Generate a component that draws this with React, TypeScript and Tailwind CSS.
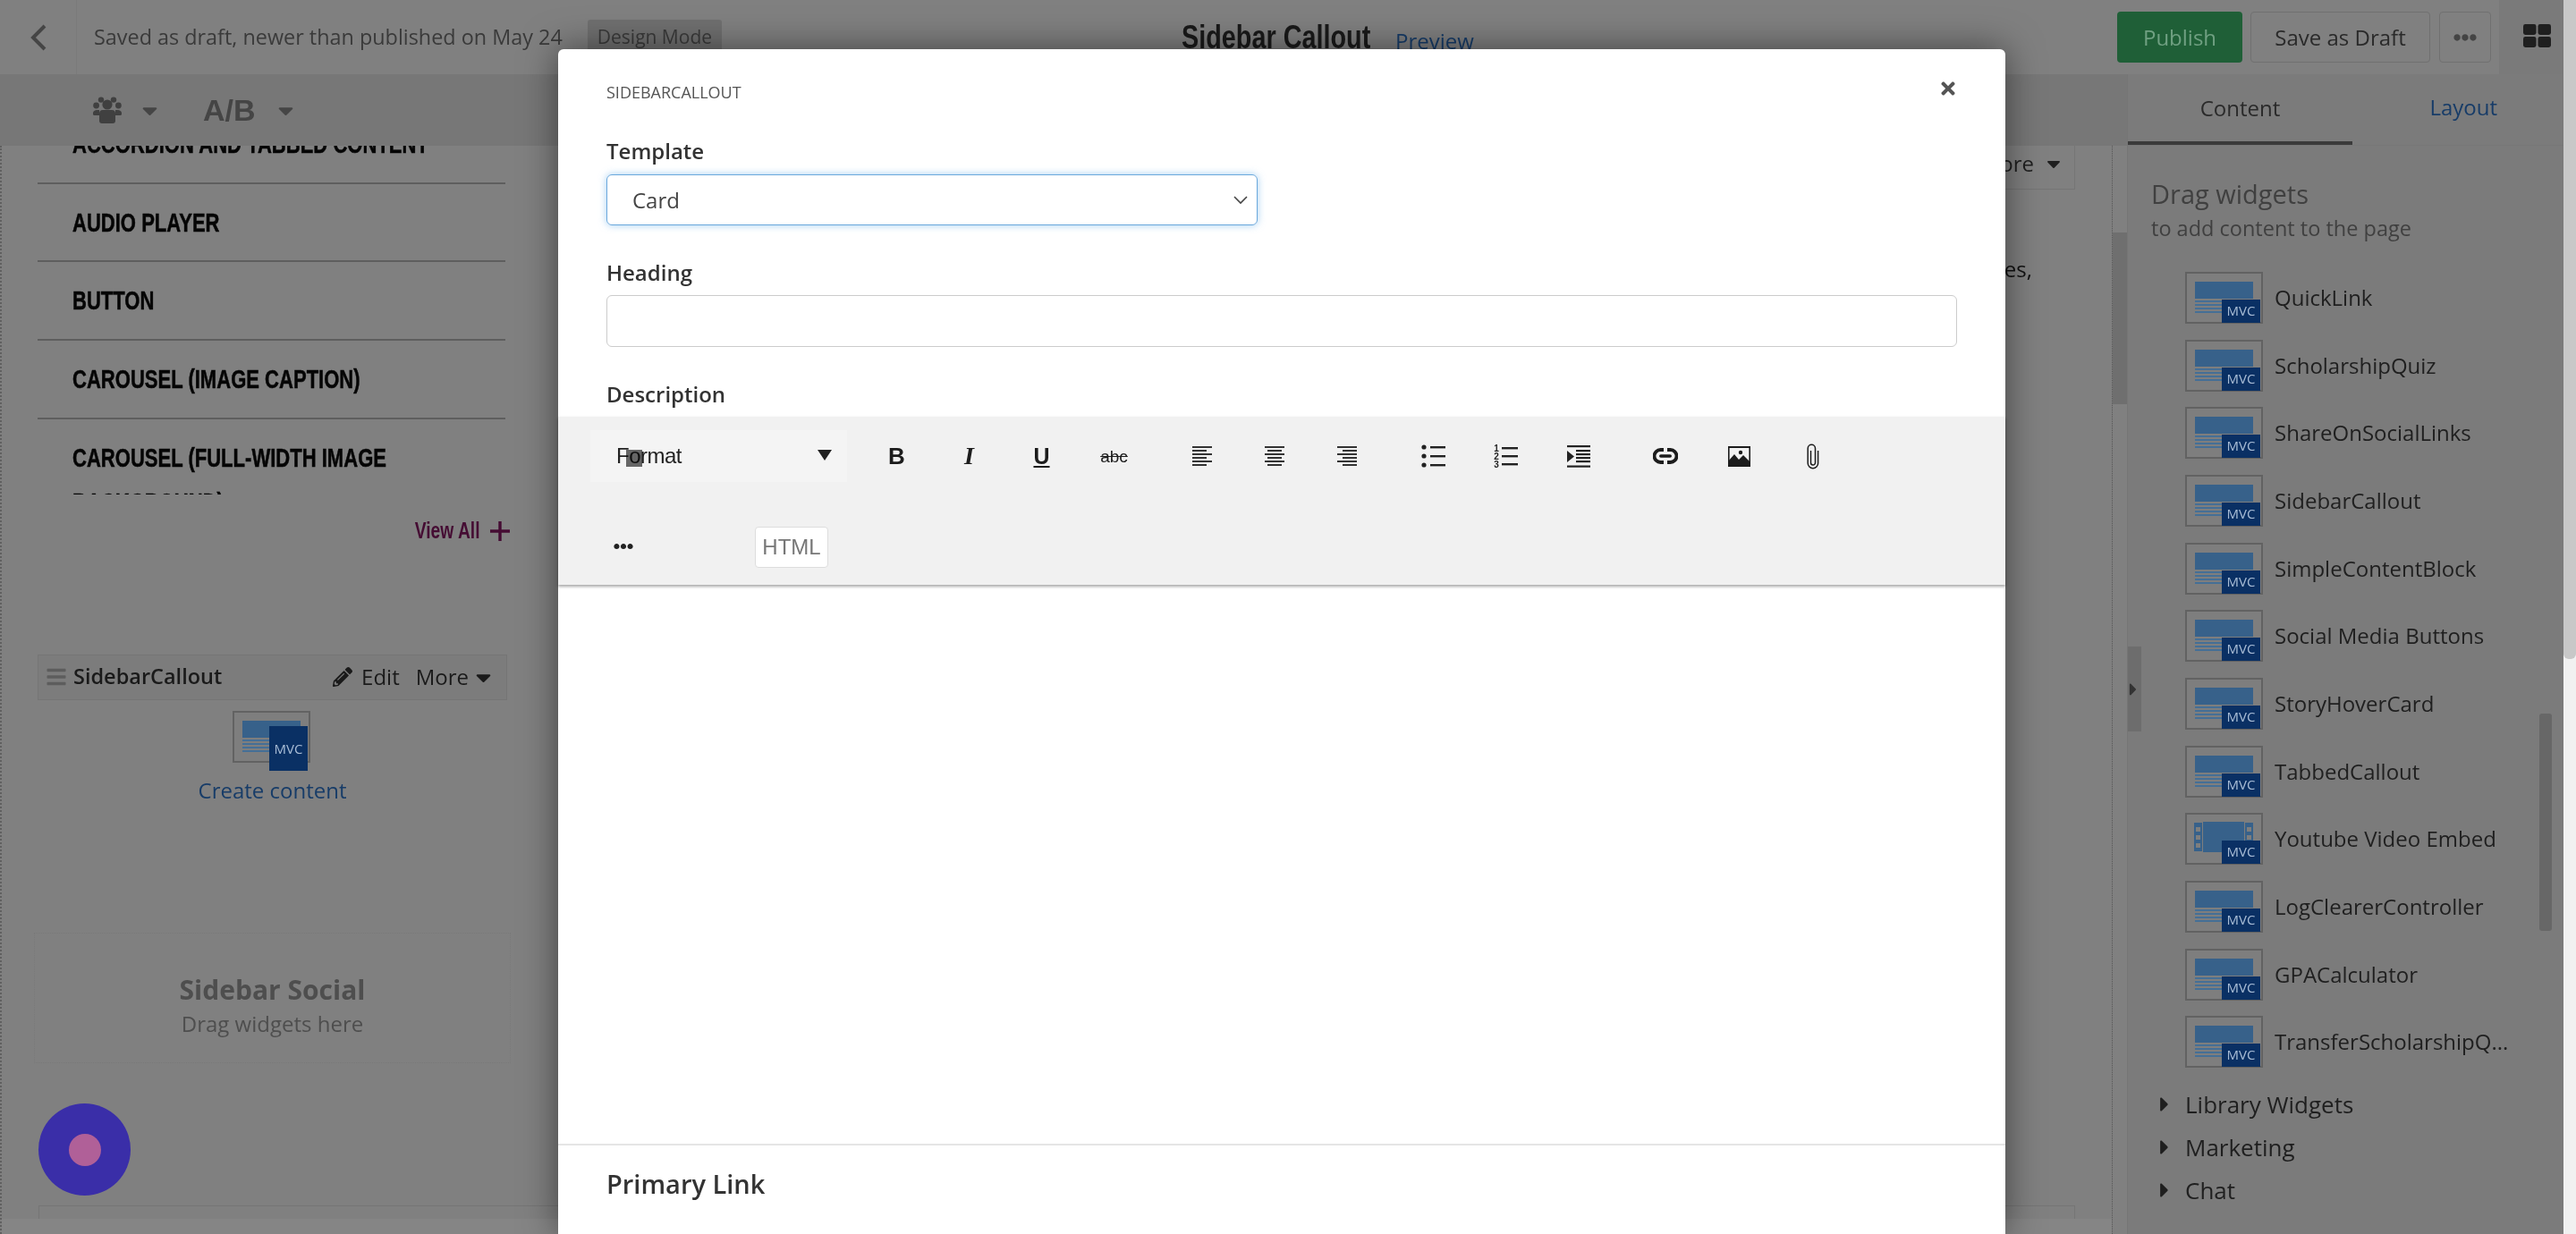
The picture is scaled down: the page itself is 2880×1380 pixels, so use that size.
import React from "react";
import { FaPencilAlt, FaBars, FaTimes, FaEllipsisH, FaCaretDown, FaCaretRight } from "react-icons/fa";

const COND = "font-['Liberation_Sans',sans-serif]";

function Squeezed({ children }: { children: React.ReactNode }) {
  return <span className="inline-block origin-left scale-x-[0.76] whitespace-nowrap">{children}</span>;
}

function MvcIcon({ video = false, tall = false }: { video?: boolean; tall?: boolean }) {
  return (
    <svg width="88" height={tall ? 68 : 58} viewBox={tall ? "0 0 88 68" : "0 0 88 58"} className="shrink-0">
      <rect x="1" y="1" width="85" height="56" fill="#7e7e7e" stroke="#626262" strokeWidth="2" />
      {video ? (
        <>
          <rect x="20" y="10" width="46" height="34" fill="#37618a" />
          <rect x="10" y="11" width="9" height="32" fill="#37618a" />
          <rect x="67" y="11" width="9" height="28" fill="#37618a" />
          <rect x="12" y="16" width="5" height="5" fill="#7e7e7e" />
          <rect x="12" y="25" width="5" height="5" fill="#7e7e7e" />
          <rect x="12" y="34" width="5" height="5" fill="#7e7e7e" />
          <rect x="69" y="16" width="5" height="5" fill="#7e7e7e" />
          <rect x="69" y="25" width="5" height="5" fill="#7e7e7e" />
        </>
      ) : (
        <>
          <rect x="11" y="11" width="65" height="19" fill="#37618a" />
          <rect x="11" y="32" width="32" height="2" fill="#456f96" />
          <rect x="11" y="36" width="32" height="2" fill="#456f96" />
          <rect x="11" y="40" width="32" height="2" fill="#456f96" />
          <rect x="11" y="44" width="32" height="2" fill="#456f96" />
        </>
      )}
      <rect x="41" y={tall ? 17 : 31} width="43" height={tall ? 50 : 26} fill="#0a3064" />
      <text x="62.5" y={tall ? 48 : 49} textAnchor="middle" fontSize="15" fill="#a9bdd6" fontFamily="Open Sans, sans-serif">MVC</text>
    </svg>
  );
}

function AlignIcon({ mode }: { mode: "l" | "c" | "r" }) {
  const ys = [1, 5, 9, 13, 17, 21];
  const wide = [22, 16, 22, 16, 22, 16];
  return (
    <svg width="24" height="24" viewBox="0 0 24 24">
      {ys.map((y, i) => {
        const w = wide[i];
        const x = mode === "l" ? 1 : mode === "r" ? 23 - w : 12 - w / 2;
        return <rect key={y} x={x} y={y} width={w} height="2" fill="#333" />;
      })}
    </svg>
  );
}

function ListIcon() {
  return (
    <svg width="28" height="26" viewBox="0 0 28 26">
      {[3, 13, 23].map((y) => (
        <g key={y}>
          <circle cx="3" cy={y} r="2.6" fill="#222" />
          <rect x="10" y={y - 1} width="17" height="2.4" fill="#222" />
        </g>
      ))}
    </svg>
  );
}

function OlIcon() {
  return (
    <svg width="28" height="28" viewBox="0 0 28 28">
      {[1, 2, 3].map((n) => (
        <g key={n}>
          <text x="3" y={n * 9} textAnchor="middle" fontSize="10" fontWeight="700" fill="#222" fontFamily="Liberation Sans, sans-serif">{n}</text>
          <rect x="9" y={n * 9 - 5} width="18" height="2.4" fill="#222" />
        </g>
      ))}
    </svg>
  );
}

function IndentIcon() {
  return (
    <svg width="27" height="25" viewBox="0 0 27 25">
      <rect x="1" y="0" width="26" height="2.2" fill="#222" />
      <rect x="1" y="22.5" width="26" height="2.2" fill="#222" />
      {[5, 9, 13, 17].map((y) => (
        <rect key={y} x="11" y={y} width="16" height="2.2" fill="#222" />
      ))}
      <path d="M1 6 L9 12.5 L1 19 Z" fill="#222" />
    </svg>
  );
}

function LinkIcon() {
  return (
    <svg width="28" height="18" viewBox="0 0 28 18">
      <path d="M12 2H8.5a7 7 0 0 0 0 14H12" fill="none" stroke="#1c1c1c" strokeWidth="3.8" />
      <path d="M16 2h3.5a7 7 0 0 1 0 14H16" fill="none" stroke="#1c1c1c" strokeWidth="3.8" />
      <rect x="7" y="7.2" width="14" height="3.6" rx="1.8" fill="#1c1c1c" />
    </svg>
  );
}

function ImageIcon() {
  return (
    <svg width="25" height="23" viewBox="0 0 25 23">
      <rect x="0.8" y="0.8" width="23.4" height="21.4" fill="#f1f1f1" stroke="#1c1c1c" strokeWidth="1.6" />
      <rect x="0" y="0" width="25" height="2" fill="#1c1c1c" />
      <path d="M0 23V17L7 9L12 15L17 10L25 18V23Z" fill="#1c1c1c" />
      <circle cx="14" cy="7" r="2.2" fill="#1c1c1c" />
    </svg>
  );
}

function ClipIcon() {
  return (
    <svg width="16" height="29" viewBox="0 0 16 29">
      <path d="M5.5 8V21.5A2.5 2.5 0 0 0 10.5 21.5V5.5A4 4 0 0 0 2.2 5.5V22A5.6 5.6 0 0 0 13.6 22V8" fill="none" stroke="#1c1c1c" strokeWidth="1.5" />
    </svg>
  );
}

function UsersIcon() {
  return (
    <svg width="32" height="30" viewBox="0 0 32 30" fill="#404040">
      <circle cx="9" cy="3.6" r="3.2" />
      <circle cx="23" cy="3.6" r="3.2" />
      <circle cx="3.6" cy="10" r="3.4" />
      <circle cx="28.4" cy="10" r="3.4" />
      <circle cx="16" cy="9" r="5.6" />
      <path d="M0 20a4 4 0 0 1 4-5h3v6H1.5A1.5 1.5 0 0 1 0 20Z" />
      <path d="M32 20a4 4 0 0 0-4-5h-3v6h5.5A1.5 1.5 0 0 0 32 20Z" />
      <path d="M7 19a4 4 0 0 1 4-4h10a4 4 0 0 1 4 4v8a3 3 0 0 1-3 3H10a3 3 0 0 1-3-3Z" />
    </svg>
  );
}

function GridIcon() {
  return (
    <svg width="31" height="26" viewBox="0 0 31 26" fill="#1f1f1f">
      <rect x="0" y="0" width="14.5" height="12" rx="2.4" />
      <rect x="16.5" y="0" width="14.5" height="12" rx="2.4" />
      <rect x="0" y="14" width="14.5" height="12" rx="2.4" />
      <rect x="16.5" y="14" width="14.5" height="12" rx="2.4" />
    </svg>
  );
}

function Slot({ children }: { children: React.ReactNode }) {
  return <div className="flex h-[58px] w-[81px] items-center justify-center">{children}</div>;
}

const widgets = [
  "QuickLink", "ScholarshipQuiz", "ShareOnSocialLinks", "SidebarCallout", "SimpleContentBlock", "Social Media Buttons",
  "StoryHoverCard", "TabbedCallout", "Youtube Video Embed", "LogClearerController", "GPACalculator", "TransferScholarshipQ...",
];

const accordion = ["ACCORDION AND TABBED CONTENT", "AUDIO PLAYER", "BUTTON", "CAROUSEL (IMAGE CAPTION)"];

export default function App() {
  return (
    <div className="relative flex h-[1380px] w-[2880px] overflow-hidden bg-[#f1f1f1] font-['Open_Sans',sans-serif]">
      <div className="relative flex h-full w-[2866px] flex-col bg-[#808080]">
        {/* Top bar */}
        <div className="flex h-[83px] shrink-0 items-center">
          <div className="flex h-full w-[86px] items-center justify-center border-r border-[#7a7a7a] text-[#444]">
            <svg width="20" height="30" viewBox="0 0 20 30"><path d="M17 2 L4 15 L17 28" fill="none" stroke="#454545" strokeWidth="4" /></svg>
          </div>
          <span className="ml-[19px] text-[23.4px] text-[#3a3a3a]">Saved as draft, newer than published on May 24</span>
          <span className="ml-[28px] rounded-[3px] bg-[#707070] px-[11px] py-[4px] text-[21px] text-[#3a3a3a]">Design Mode</span>
          <span className={`ml-[514px] w-[211px] text-[36px] font-bold text-[#1a1a1a] ${COND}`}>
            <span className="inline-block origin-left scale-x-[0.8] whitespace-nowrap">Sidebar Callout</span>
          </span>
          <span className="ml-[28px] mt-[8px] text-[24px] text-[#173c68]">Preview</span>
          <div className="ml-auto flex h-full items-center">
            <button className="h-[57px] w-[140px] rounded-[4px] bg-[#1f5f37] text-[24px] text-[#70a082]">Publish</button>
            <button className="ml-[9px] h-[57px] w-[201px] rounded-[4px] border border-[#707070] text-[24px] text-[#2a2a2a]">Save as Draft</button>
            <button className="ml-[10px] flex h-[57px] w-[58px] items-center justify-center rounded-[4px] border border-[#707070] text-[26px] text-[#444]"><FaEllipsisH /></button>
            <div className="ml-[9px] flex h-full w-[72px] items-center justify-end bg-[#7a7a7a] pr-[14px]">
              <div className="mb-[4px]"><GridIcon /></div>
            </div>
          </div>
        </div>

        <div className="flex min-h-0 flex-1">
          {/* Left part */}
          <div className="flex w-[2378px] flex-col">
            <div className="flex h-[80px] shrink-0 items-center bg-[#777777] pl-[104px] text-[#454545]">
              <UsersIcon />
              <FaCaretDown className="ml-[18px] text-[27px]" />
              <span className="ml-[46px] font-['Liberation_Sans',sans-serif] text-[34px] font-bold">A/B</span>
              <FaCaretDown className="ml-[20px] text-[27px]" />
            </div>
            <div className="flex min-h-0 flex-1">
              <div className="flex w-[2361px] flex-col border-l-2 border-dotted border-[#606060]">
                <div className="flex h-[1185px] shrink-0">
                  {/* Widget column */}
                  <div className="flex w-[608px] shrink-0 flex-col">
                    <div className="ml-[40px] mr-[45px] h-[390px] overflow-hidden">
                      <div className="-mt-[45px]">
                        {accordion.map((t) => (
                          <div key={t} className={`h-[87.7px] border-b-2 border-[#5e5e5e] pt-[18px] pl-[39px] text-[29px] font-bold leading-[50px] text-[#050505] [-webkit-text-stroke:0.5px_#050505] ${COND}`}><Squeezed>{t}</Squeezed></div>
                        ))}
                        <div className={`pt-[18px] pl-[39px] text-[29px] font-bold leading-[50px] text-[#050505] [-webkit-text-stroke:0.5px_#050505] ${COND}`}>
                          <Squeezed>CAROUSEL (FULL-WIDTH IMAGE</Squeezed><br /><Squeezed>BACKGROUND)</Squeezed>
                        </div>
                      </div>
                    </div>
                    <div className={`mr-[40px] mt-[22px] flex items-center justify-end gap-[12px] text-[25px] font-bold text-[#450c33] ${COND}`}>
                      <span className="inline-block origin-right scale-x-[0.77] whitespace-nowrap">View All</span>
                      <svg width="22" height="22" viewBox="0 0 22 22"><path d="M11 0V22M0 11H22" stroke="#450c33" strokeWidth="3.4" /></svg>
                    </div>
                    <div className="ml-[40px] mr-[43px] mt-[119px] flex h-[51px] items-center border border-[#757575] bg-[#7c7c7c] pl-[8px] text-[#1a1a1a]">
                      <FaBars className="text-[24px] text-[#5d5d5d]" />
                      <span className="ml-[7px] text-[23.5px] font-semibold">SidebarCallout</span>
                      <FaPencilAlt className="ml-auto text-[22px]" />
                      <span className="ml-[10px] text-[24px]">Edit</span>
                      <span className="ml-[18px] text-[24px]">More</span>
                      <FaCaretDown className="ml-[3px] mr-[12px] text-[27px]" />
                    </div>
                    <div className="ml-[40px] mr-[43px] mt-[12px] flex flex-col items-center">
                      <div className="-ml-[1px]"><MvcIcon tall /></div>
                      <span className="mt-[4px] text-[24px] leading-[34px] text-[#173c68]">Create content</span>
                    </div>
                    <div className="ml-[36px] mr-[39px] mt-[142px] flex h-[146px] flex-col items-center justify-center border border-dotted border-[#797979] pt-[17px]">
                      <span className="text-[30px] font-bold leading-[40px] text-[#4e4e4e]">Sidebar Social</span>
                      <span className="text-[24px] leading-[35px] text-[#4e4e4e]">Drag widgets here</span>
                    </div>
                  </div>
                  {/* Page content, mostly under the modal */}
                  <div className="flex flex-1 flex-col">
                    <div className="ml-auto mr-[41px] flex h-[49px] w-[420px] items-center justify-end gap-[10px] border-r border-b border-[#757575] pb-[8px] pr-[11px] text-[24px] text-[#1f1f1f]">
                      More
                      <FaCaretDown className="text-[24px]" />
                    </div>
                    <p className="mr-[89px] mt-[72px] text-right text-[24px] leading-[34px] text-[#111]">courses,</p>
                  </div>
                </div>
                <div className="ml-[41px] mr-[41px] h-[15px] border-l border-t border-r border-[#757575]" />
                <div className="h-[17px] shrink-0 bg-[#858585]" />
              </div>
              <div className="w-[17px] shrink-0 border-l border-dotted border-[#555]">
                <div className="mt-[97px] h-[192px] bg-[#6f6f6f]" />
              </div>
            </div>
          </div>

          {/* Right panel */}
          <div className="relative flex min-w-0 flex-1 flex-col border-l border-[#757575] bg-[#7b7b7b]">
            <div className="flex h-[80px] shrink-0 items-end border-b border-[#777]">
              <div className="flex h-[79px] w-[251px] items-center justify-center border-b-[4px] border-[#3a3a3a] text-[24px] text-[#2a2a2a]">Content</div>
              <div className="flex h-[79px] flex-1 items-center justify-end pb-[6px] pr-[74px] text-[24px] text-[#173c68]">Layout</div>
            </div>
            <div className="pl-[26px] pt-[35px]">
              <div className="text-[29px] leading-[38px] text-[#404040]">Drag widgets</div>
              <div className="mt-[3px] text-[23.5px] leading-[32px] text-[#404040]">to add content to the page</div>
            </div>
            <div className="relative mt-[24px]">
              <div className="pl-[64px]">
                {widgets.map((w) => (
                  <div key={w} className="flex h-[75.7px] items-center gap-[12px] text-[24px] whitespace-nowrap text-[#1f1f1f]">
                    <MvcIcon video={w === "Youtube Video Embed"} />
                    <span>{w}</span>
                  </div>
                ))}
              </div>
              <div className="absolute right-[13px] top-[503px] h-[243px] w-[14px] rounded-[3px] bg-[#676767]" />
            </div>
            <div className="mt-[8px] flex flex-col pl-[28px]">
              {["Library Widgets", "Marketing", "Chat"].map((t) => (
                <div key={t} className="flex h-[48px] items-center text-[26px] text-[#1f1f1f]">
                  <FaCaretRight className="mr-[10px] text-[26px]" />
                  {t}
                </div>
              ))}
            </div>
            <div className="absolute left-0 top-[640px] flex h-[95px] w-[15px] items-center justify-start bg-[#6d6d6d] text-[#333]">
              <FaCaretRight className="-ml-[3px] text-[22px]" />
            </div>
          </div>
        </div>

        {/* Floating chat button */}
        <div className="absolute left-[43px] top-[1234px] flex h-[103px] w-[103px] items-center justify-center rounded-full bg-[#3a2ea8]">
          <div className="h-[36px] w-[36px] rounded-full bg-[#b06098]" />
        </div>

        {/* Modal */}
        <div className="absolute left-[624px] top-[55px] flex h-[1325px] w-[1618px] flex-col rounded-t-[6px] bg-white shadow-[0_0_40px_rgba(0,0,0,0.5)]">
          <div className="flex items-start justify-between pl-[54px] pr-[53px] pt-[36px]">
            <span className="text-[18px] leading-[24px] text-[#555]">SIDEBARCALLOUT</span>
            <FaTimes className="-mt-[3px] text-[22px] text-[#555]" />
          </div>
          <div className="px-[54px]">
            <div className="mt-[38px] text-[24px] font-semibold leading-[32px] text-[#333]">Template</div>
            <div className="mt-[10px] flex h-[57px] w-[728px] items-center justify-between rounded-[6px] border border-[#6aa8dc] pl-[28px] pr-[10px] text-[24px] text-[#444] shadow-[0_0_8px_rgba(102,175,233,0.6)]">
              Card
              <svg width="16" height="10" viewBox="0 0 16 10"><path d="M1 1 L8 8 L15 1" fill="none" stroke="#444" strokeWidth="1.6" /></svg>
            </div>
            <div className="mt-[37px] text-[24px] font-semibold leading-[32px] text-[#333]">Heading</div>
            <div className="mt-[9px] h-[58px] w-full rounded-[6px] border border-[#ccc]" />
            <div className="mt-[37px] text-[24px] font-semibold leading-[32px] text-[#333]">Description</div>
          </div>
          {/* Toolbar */}
          <div className="mt-[9px] h-[188px] shrink-0 bg-[#f1f1f1] shadow-[0_2px_3px_rgba(0,0,0,0.35)]">
            <div className="flex h-[123px] items-start pl-[36px] pt-[15px] text-[#1c1c1c]">
              <div className="relative flex h-[58px] w-[287px] items-center bg-[#f4f4f4] pl-[29px] font-['Liberation_Sans',sans-serif] text-[24px] tracking-[-0.5px] text-[#222]">
                Format
                <span className="absolute left-[40px] top-[22px] h-[19px] w-[18px] bg-[#6a6a6a] mix-blend-multiply" />
                <svg className="absolute right-[17px] top-[22px]" width="16" height="12" viewBox="0 0 16 12"><path d="M0 0H16L8 12Z" fill="#222" /></svg>
              </div>
              <div className="ml-[15px] flex">
                <Slot><span className="font-['Liberation_Sans',sans-serif] text-[26px] font-bold leading-none">B</span></Slot>
                <Slot><span className="font-['Liberation_Serif',serif] text-[28px] font-bold italic leading-none">I</span></Slot>
                <Slot><span className="font-['Liberation_Sans',sans-serif] text-[25px] font-bold leading-none underline underline-offset-2">U</span></Slot>
                <Slot><span className="font-['Liberation_Sans',sans-serif] text-[19px] leading-none line-through">abc</span></Slot>
              </div>
              <div className="ml-[17px] flex">
                <Slot><AlignIcon mode="l" /></Slot>
                <Slot><AlignIcon mode="c" /></Slot>
                <Slot><AlignIcon mode="r" /></Slot>
              </div>
              <div className="ml-[16px] flex">
                <Slot><ListIcon /></Slot>
                <Slot><OlIcon /></Slot>
                <Slot><IndentIcon /></Slot>
              </div>
              <div className="ml-[16px] flex gap-[1.5px]">
                <Slot><LinkIcon /></Slot>
                <Slot><ImageIcon /></Slot>
                <Slot><ClipIcon /></Slot>
              </div>
            </div>
            <div className="flex items-center pl-[62px]">
              <FaEllipsisH className="-mt-[3px] text-[22px] text-[#222]" />
              <span className="ml-[136px] flex h-[46px] w-[82px] items-center justify-center rounded-[4px] border border-[#ddd] bg-white font-['Liberation_Sans',sans-serif] text-[24px] text-[#777]">HTML</span>
            </div>
          </div>
          <div className="flex-1" />
          <div className="h-[101px] shrink-0 border-t-2 border-[#e5e5e5] pl-[54px] pt-[21px] text-[29px] font-semibold leading-[44px] text-[#333]">Primary Link</div>
        </div>
      </div>

      {/* Browser scrollbar */}
      <div className="h-full w-[14px] shrink-0">
        <div className="h-[737px] rounded-b-[6px] bg-[#c8c8c8]" />
      </div>
    </div>
  );
}
